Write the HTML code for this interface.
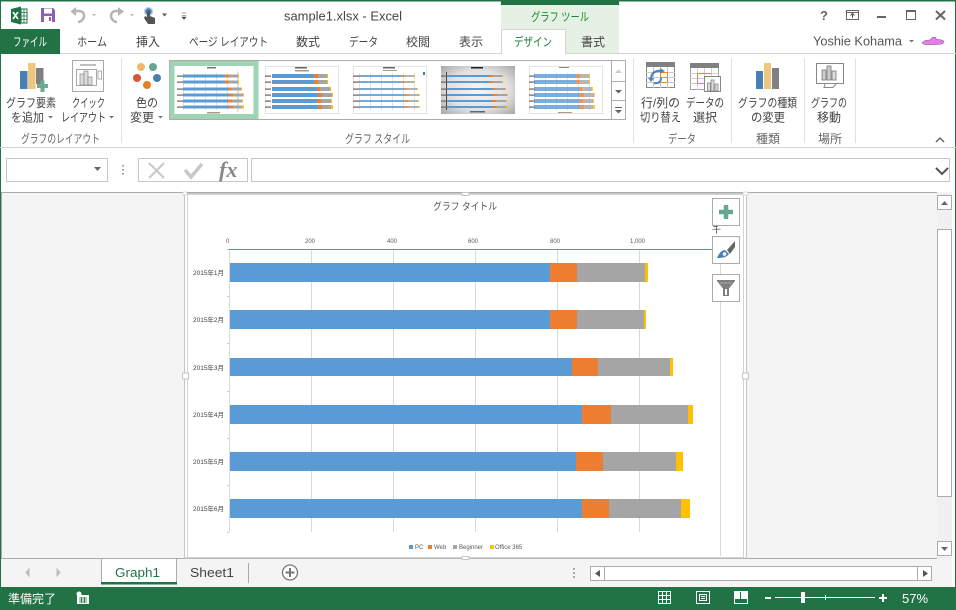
<!DOCTYPE html>
<html><head><meta charset="utf-8"><style>
html,body{margin:0;padding:0;width:956px;height:610px;overflow:hidden;background:#fff}
svg{display:block}
text{font-family:"Liberation Sans","Noto Sans CJK JP",sans-serif;fill:#444;font-size:12px}
.r{font-size:12px}
.g{fill:#666;font-size:12px}
.tb{font-size:12px}
.c{font-size:6px;fill:#595959}
.m{font-size:6.500px;fill:#444}
</style></head><body>
<svg width="956" height="610" viewBox="0 0 956 610" xmlns="http://www.w3.org/2000/svg">
<defs>
<g id="bars">
<rect x="230" y="263" width="320" height="19" fill="#5b9bd5"/><rect x="550" y="263" width="27" height="19" fill="#ed7d31"/><rect x="577" y="263" width="68" height="19" fill="#a5a5a5"/><rect x="645" y="263" width="3" height="19" fill="#ffc000"/>
<rect x="230" y="310" width="320" height="19" fill="#5b9bd5"/><rect x="550" y="310" width="27" height="19" fill="#ed7d31"/><rect x="577" y="310" width="67" height="19" fill="#a5a5a5"/><rect x="644" y="310" width="2" height="19" fill="#ffc000"/>
<rect x="230" y="358" width="342" height="18" fill="#5b9bd5"/><rect x="572" y="358" width="26" height="18" fill="#ed7d31"/><rect x="598" y="358" width="72" height="18" fill="#a5a5a5"/><rect x="670" y="358" width="3" height="18" fill="#ffc000"/>
<rect x="230" y="405" width="352" height="19" fill="#5b9bd5"/><rect x="582" y="405" width="29" height="19" fill="#ed7d31"/><rect x="611" y="405" width="77" height="19" fill="#a5a5a5"/><rect x="688" y="405" width="5" height="19" fill="#ffc000"/>
<rect x="230" y="452" width="346" height="19" fill="#5b9bd5"/><rect x="576" y="452" width="27" height="19" fill="#ed7d31"/><rect x="603" y="452" width="73" height="19" fill="#a5a5a5"/><rect x="676" y="452" width="7" height="19" fill="#ffc000"/>
<rect x="230" y="499" width="352" height="19" fill="#5b9bd5"/><rect x="582" y="499" width="27" height="19" fill="#ed7d31"/><rect x="609" y="499" width="72" height="19" fill="#a5a5a5"/><rect x="681" y="499" width="9" height="19" fill="#ffc000"/>
</g>
<g id="tr" fill="none">
<path stroke="#5b9bd5" d="M7 10H49M7 16H49M7 23H52M7 29H53M7 35H52M7 41H53"/>
<path stroke="#ed7d31" d="M49 10H53M49 16H53M52 23H55M53 29H57M52 35H56M53 41H57"/>
<path stroke="#a5a5a5" d="M53 10H62M53 16H62M55 23H65M57 29H67M56 35H66M57 41H66"/>
<path stroke="#ffc000" d="M62 10H63M62 16H63M65 23H66M67 29H68M66 35H67M66 41H68"/>
</g>
<g id="ticks" fill="#7a5a50">
<rect x="0" y="9.500" width="6" height="1.200"/><rect x="0" y="15.500" width="6" height="1.200"/><rect x="0" y="22.500" width="6" height="1.200"/><rect x="0" y="28.500" width="6" height="1.200"/><rect x="0" y="34.500" width="6" height="1.200"/><rect x="0" y="40.500" width="6" height="1.200"/>
</g>
<g id="grid" stroke="#e2e2e2" stroke-width="1">
<path d="M6.500 7V44M17.500 7V44M28.500 7V44M39.500 7V44M50.500 7V44M61.500 7V44"/>
</g>
<radialGradient id="gr" cx="50%" cy="50%" r="70%"><stop offset="0" stop-color="#f6f6f6"/><stop offset=".6" stop-color="#e0e0e0"/><stop offset="1" stop-color="#a8a8a8"/></radialGradient>
</defs>

<rect width="956" height="610" fill="#fff"/>
<!-- window border -->
<rect x="0" y="0" width="956" height="1.500" fill="#217346"/>
<rect x="0" y="0" width="1" height="610" fill="#217346"/>
<rect x="955" y="0" width="1" height="610" fill="#217346"/>

<!-- QAT -->
<path d="M11 9L21 6.500V24.500L11 22Z" fill="#1f7246"/><rect x="21" y="9" width="6" height="14" fill="#fff" stroke="#1f7246"/><path d="M21 12.500H27M21 16H27M21 19.500H27M24 9V23" stroke="#1f7246" stroke-width=".8"/>
<path d="M13 12L18 19M18 12L13 19" stroke="#fff" stroke-width="1.600"/>
<path d="M41 8H53L55 10V22H41Z" fill="#8a5fb5"/><rect x="44" y="8.500" width="8" height="5" fill="#fff"/><rect x="44" y="16" width="8" height="6" fill="#fff"/><rect x="49" y="17" width="2" height="4" fill="#8a5fb5"/>
<path d="M73 11H79C83 11 84 14 84 16C84 19 81 22 78 22" fill="none" stroke="#b5b5b5" stroke-width="2.500"/><path d="M70.500 11.500L76 7V16Z" fill="#b5b5b5"/>
<path d="M92 14L96 14L94 16.500Z" fill="#bbb"/>
<path d="M121 11H116C112 11 111 14 111 16C111 19 114 22 117 22" fill="none" stroke="#b5b5b5" stroke-width="2.500"/><path d="M124 11.500L118 7V16Z" fill="#b5b5b5"/>
<path d="M130 14L134 14L132 16.500Z" fill="#bbb"/>
<circle cx="148.500" cy="11.500" r="4" fill="#4a7fb0" stroke="#c3d6e8" stroke-width="1.500"/><path d="M147 11V17L145 16L144 18L148 24H155V18L150 16V11Z" fill="#555"/>
<path d="M162 13.500L167 13.500L164.500 16.500Z" fill="#555"/>
<path d="M182 13H186M182 15.500H186M182 17L186 17L184 19.500Z" fill="#555" stroke="#555" stroke-width=".6"/>

<text x="284" y="20.500" textLength="118" lengthAdjust="spacingAndGlyphs" style="font-size:13px">sample1.xlsx - Excel</text>

<!-- contextual tool -->
<rect x="501" y="1" width="118" height="52" fill="#e5f1e5"/>
<rect x="501" y="1" width="118" height="4" fill="#217346"/>
<text x="531" y="21" style="font-size:12px;fill:#1a8a2a" textLength="58" lengthAdjust="spacingAndGlyphs">グラフ ツール</text>

<!-- window controls -->
<text x="820" y="20" style="font-size:13px;font-weight:bold;fill:#666">?</text>
<rect x="846.500" y="10.500" width="12" height="9" fill="none" stroke="#666"/><path d="M846 12.500H859" stroke="#666"/><path d="M852.500 18V14M850.500 15.500L852.500 13.500L854.500 15.500" fill="none" stroke="#555"/>
<rect x="877" y="16" width="9" height="2" fill="#666"/>
<rect x="906.500" y="10.500" width="9" height="9" fill="none" stroke="#666"/><rect x="906" y="10" width="10" height="2" fill="#666"/>
<path d="M936 11L945 19.500M945 11L936 19.500" stroke="#666" stroke-width="2"/>

<!-- tabs -->
<rect x="0" y="29" width="60" height="25" fill="#217346"/>
<rect x="60" y="53" width="896" height="1" fill="#d4d4d4"/>
<path d="M501.500 54V29.500H565.500V53" fill="#fff" stroke="#d4d4d4"/><rect x="502" y="52" width="63" height="3" fill="#fff"/>
<text x="13" y="46" style="fill:#fff;font-size:12px" textLength="34" lengthAdjust="spacingAndGlyphs">ファイル</text>
<text x="77" y="46" class="tb" textLength="30" lengthAdjust="spacingAndGlyphs">ホーム</text>
<text x="136" y="46" class="tb" textLength="24" lengthAdjust="spacingAndGlyphs">挿入</text>
<text x="189" y="46" class="tb" textLength="79" lengthAdjust="spacingAndGlyphs">ページ レイアウト</text>
<text x="296" y="46" class="tb" textLength="24" lengthAdjust="spacingAndGlyphs">数式</text>
<text x="349" y="46" class="tb" textLength="29" lengthAdjust="spacingAndGlyphs">データ</text>
<text x="406" y="46" class="tb" textLength="24" lengthAdjust="spacingAndGlyphs">校閲</text>
<text x="459" y="46" class="tb" textLength="24" lengthAdjust="spacingAndGlyphs">表示</text>
<text x="514" y="46" style="fill:#1a7a30;font-size:12px" textLength="38" lengthAdjust="spacingAndGlyphs">デザイン</text>
<text x="581" y="46" class="tb" textLength="24" lengthAdjust="spacingAndGlyphs">書式</text>
<text x="813" y="45.500" style="font-size:12.500px;fill:#555" textLength="89" lengthAdjust="spacingAndGlyphs">Yoshie Kohama</text>
<path d="M909 40H914L911.500 42.500Z" fill="#777"/>
<path d="M922 43C923 41 926 40 930 40L932 37.500H936V39.500C940 39.500 944 40 944 42C944 44 940 44.500 934 44.500H926C924 44.500 923 44 922 43Z" fill="#ee7bee" stroke="#555" stroke-width=".5"/>

<!-- ribbon -->
<rect x="0" y="147" width="956" height="1" fill="#d4d4d4"/>
<path d="M121.500 58V143M633.500 58V143M731.500 58V143M804.500 58V143M855.500 58V143" stroke="#e1e1e1"/>

<!-- chart elements icon -->
<rect x="20" y="71" width="7.500" height="18" fill="#4a7fb5"/><rect x="28" y="63" width="7.500" height="26" fill="#edc77d"/><rect x="36" y="68" width="7.500" height="16" fill="#808080"/>
<path d="M37 86H48M42.500 80.500V92" stroke="#6da993" stroke-width="4"/>
<!-- quick layout -->
<rect x="72.500" y="60.500" width="31" height="31" fill="#fff" stroke="#a8a8a8"/>
<path d="M80 65H96" stroke="#a8a8a8" stroke-width="1.500"/><rect x="76.500" y="69.500" width="20" height="16" fill="#fff" stroke="#a8a8a8"/>
<rect x="80" y="74" width="4" height="11" fill="#ddd" stroke="#888" stroke-width=".7"/><rect x="84" y="71" width="4" height="14" fill="#ddd" stroke="#888" stroke-width=".7"/><rect x="88" y="77" width="4" height="8" fill="#ddd" stroke="#888" stroke-width=".7"/>
<rect x="98" y="71" width="3.500" height="8" fill="#fff" stroke="#888" stroke-width=".7"/>
<!-- colors -->
<circle cx="141" cy="67" r="4" fill="#eebb6e"/><circle cx="153" cy="67" r="4" fill="#66a690"/><circle cx="137" cy="78" r="4" fill="#d9553a"/><circle cx="157" cy="78" r="4" fill="#4a7fb0"/><circle cx="147" cy="85" r="4" fill="#e67e22"/>

<text x="6" y="107" class="r" textLength="50" lengthAdjust="spacingAndGlyphs">グラフ要素</text>
<text x="11" y="121.500" class="r" textLength="33" lengthAdjust="spacingAndGlyphs">を追加</text><path d="M48 116H53L50.500 118.500Z" fill="#777"/>
<text x="72" y="107" class="r" textLength="33" lengthAdjust="spacingAndGlyphs">クイック</text>
<text x="61" y="121.500" class="r" textLength="45" lengthAdjust="spacingAndGlyphs">レイアウト</text><path d="M109 116H114L111.500 118.500Z" fill="#777"/>
<text x="136" y="107" class="r" textLength="22" lengthAdjust="spacingAndGlyphs">色の</text>
<text x="130" y="121.500" class="r" textLength="24" lengthAdjust="spacingAndGlyphs">変更</text><path d="M158 116H163L160.500 118.500Z" fill="#777"/>
<text x="21" y="143" class="g" textLength="79" lengthAdjust="spacingAndGlyphs">グラフのレイアウト</text>
<text x="345" y="143" class="g" textLength="65" lengthAdjust="spacingAndGlyphs">グラフ スタイル</text>

<!-- gallery -->
<rect x="169.500" y="60.500" width="456" height="59" fill="#fff" stroke="#ababab"/>
<rect x="172" y="63.500" width="84" height="53" fill="#fff" stroke="#9fd3b5" stroke-width="5"/>
<g transform="translate(177,66)"><use href="#grid"/><rect x="60" y="5" width="1" height="41" fill="#ddd"/></g>
<use href="#tr" stroke-width="3" transform="translate(176,66)"/>
<use href="#ticks" transform="translate(177,66)"/>
<rect x="207" y="67" width="9" height="1.500" fill="#777"/><rect x="207" y="112" width="13" height="1.500" fill="#a98"/>

<rect x="265.500" y="66.500" width="73" height="47" fill="#fff" stroke="#e4e4e4"/>
<use href="#ticks" transform="translate(265,66)"/>
<use href="#tr" stroke-width="4" transform="translate(265,66)"/>
<rect x="295" y="67" width="12" height="1.500" fill="#666"/><rect x="295" y="70" width="14" height="1.500" fill="#a98"/>

<rect x="353.500" y="66.500" width="73" height="47" fill="#fff" stroke="#e4e4e4"/>
<use href="#grid" transform="translate(353,66)"/>
<use href="#ticks" transform="translate(353,66)"/>
<g opacity=".85"><use href="#tr" stroke-width="2" transform="translate(352,66)"/></g>
<rect x="383" y="67" width="12" height="1.500" fill="#666"/><rect x="383" y="70" width="14" height="1" fill="#a98"/>
<rect x="423" y="72" width="2" height="3" fill="#47a"/>

<rect x="441" y="66" width="74" height="48" fill="url(#gr)"/>
<rect x="446" y="72" width="1" height="38" fill="#444"/>
<use href="#ticks" transform="translate(441,66)"/>
<use href="#tr" stroke-width="2" transform="translate(440,66)"/>
<rect x="471" y="67" width="12" height="1.500" fill="#222"/><rect x="470" y="111" width="15" height="1.500" fill="#666"/>

<rect x="529.500" y="66.500" width="73" height="47" fill="#fff" stroke="#e4e4e4"/>
<use href="#grid" transform="translate(528,66)"/>
<use href="#ticks" transform="translate(529,66)"/>
<g opacity=".8"><use href="#tr" stroke-width="4" transform="translate(527,66)"/></g>
<rect x="559" y="67" width="10" height="1" fill="#888"/><rect x="558" y="112" width="14" height="1" fill="#a98"/>

<rect x="611.500" y="60.500" width="14" height="59" fill="#fff" stroke="#ababab"/>
<path d="M611 81.500H625M611 100.500H625" stroke="#ababab"/>
<path d="M615 73H622L618.500 69.500Z" fill="#ccc"/>
<path d="M615 90H622L618.500 93.500Z" fill="#666"/>
<path d="M615 107.500H622" stroke="#666"/><path d="M615 110H622L618.500 113.500Z" fill="#666"/>

<!-- switch icon -->
<g transform="translate(646,62)"><rect x=".5" y=".5" width="28" height="25" fill="#fff" stroke="#888"/><rect width="29" height="5" fill="#808080"/>
<path d="M0 10.500H29M0 15.500H29M0 20.500H29M7.500 5V26M14.500 5V26M21.500 5V26" stroke="#c8c8c8"/>
<rect x="14.500" y="10.500" width="7" height="10" fill="none" stroke="#e88a2e"/>
<path d="M21.500 10.500V20.500M14.500 15.500H21.500" stroke="#e88a2e"/>
<path d="M5 17C5 11 10 8 15 9" fill="none" stroke="#4a85c0" stroke-width="2.200"/><path d="M14 6L19 9L14 12Z" fill="#4a85c0"/><path d="M2 16L8 16L5 20Z" fill="#4a85c0"/>
<path d="M15 16C15 20 12 22 8 21" fill="none" stroke="#4a85c0" stroke-width="2"/></g>
<!-- select data -->
<g transform="translate(690,63)"><rect x=".5" y=".5" width="28" height="26" fill="#fff" stroke="#a0a0a0"/><rect width="29" height="5" fill="#808080"/>
<path d="M0 10.500H29M0 15.500H29M0 20.500H29M7.500 5V27M14.500 5V27M21.500 5V27" stroke="#d0d0d0"/>
<path d="M7.500 15.500V10.500H21.500M7.500 15.500V20.500H14" fill="none" stroke="#e88a2e"/>
<rect x="14.500" y="13.500" width="16" height="15" fill="#fff" stroke="#888"/>
<rect x="17.500" y="20" width="3" height="8" fill="#ddd" stroke="#777" stroke-width=".7"/><rect x="21" y="17" width="3" height="11" fill="#ddd" stroke="#777" stroke-width=".7"/><rect x="25" y="21" width="3" height="7" fill="#ddd" stroke="#777" stroke-width=".7"/></g>
<!-- chart type -->
<rect x="756" y="71" width="7" height="18" fill="#4a7fb5"/><rect x="764" y="63" width="7" height="26" fill="#edc77d"/><rect x="772" y="68" width="7" height="21" fill="#808080"/>
<!-- move chart -->
<rect x="816.500" y="63.500" width="27" height="20" fill="#fff" stroke="#888"/><path d="M825 84L824 87.500H833L836 84" fill="#fff" stroke="#888"/>
<rect x="822" y="70" width="4" height="10" fill="#ccc" stroke="#777" stroke-width=".8"/><rect x="827" y="66" width="4" height="14" fill="#ccc" stroke="#777" stroke-width=".8"/><rect x="832" y="71" width="4" height="9" fill="#ddd" stroke="#777" stroke-width=".8"/>

<text x="641" y="107" class="r" textLength="39" lengthAdjust="spacingAndGlyphs">行/列の</text>
<text x="640" y="121.500" class="r" textLength="41" lengthAdjust="spacingAndGlyphs">切り替え</text>
<text x="686" y="107" class="r" textLength="38" lengthAdjust="spacingAndGlyphs">データの</text>
<text x="693" y="121.500" class="r" textLength="24" lengthAdjust="spacingAndGlyphs">選択</text>
<text x="668" y="143" class="g" textLength="28" lengthAdjust="spacingAndGlyphs">データ</text>
<text x="738" y="107" class="r" textLength="59" lengthAdjust="spacingAndGlyphs">グラフの種類</text>
<text x="751" y="121.500" class="r" textLength="34" lengthAdjust="spacingAndGlyphs">の変更</text>
<text x="756" y="143" class="g" textLength="24" lengthAdjust="spacingAndGlyphs">種類</text>
<text x="811" y="107" class="r" textLength="36" lengthAdjust="spacingAndGlyphs">グラフの</text>
<text x="817" y="121.500" class="r" textLength="24" lengthAdjust="spacingAndGlyphs">移動</text>
<text x="818" y="143" class="g" textLength="24" lengthAdjust="spacingAndGlyphs">場所</text>
<path d="M936 142L940 138L944 142" fill="none" stroke="#666" stroke-width="1.500"/>

<!-- formula bar -->
<rect x="6.500" y="158.500" width="101" height="23" fill="#fff" stroke="#c6c6c6"/>
<path d="M94 167H101L97.500 171Z" fill="#666"/>
<path d="M123 165V166.500M123 169V170.500M123 173V174.500" stroke="#999" stroke-width="2"/>
<rect x="138.500" y="158.500" width="109" height="23" fill="#fff" stroke="#c6c6c6"/>
<path d="M149 163L164 178M164 163L149 178" stroke="#c8c8c8" stroke-width="2"/>
<path d="M185 170L191 177L202 164" fill="none" stroke="#c8c8c8" stroke-width="3.500"/>
<text x="219" y="177" style="font-family:'Liberation Serif',serif;font-style:italic;font-weight:bold;font-size:22px;fill:#888">fx</text>
<rect x="251.500" y="158.500" width="698" height="23" fill="#fff" stroke="#c6c6c6"/>
<path d="M936 168L942 174L948 168" fill="none" stroke="#555" stroke-width="2"/>

<!-- sheet area -->
<rect x="1" y="192" width="954" height="395" fill="#f4f4f4"/>
<rect x="1" y="192" width="936" height="1" fill="#ababab"/>
<rect x="1" y="192" width="1" height="367" fill="#ababab"/>
<rect x="937" y="193" width="15" height="366" fill="#f0f0f0"/><rect x="952" y="192" width="3" height="395" fill="#fff"/>
<rect x="1" y="558" width="936" height="1" fill="#ababab"/>

<!-- chart frame -->
<rect x="184.500" y="193.500" width="562" height="364.500" fill="#fff" stroke="#c6c6c6"/>
<rect x="187.500" y="194.500" width="556" height="363" fill="#fff" stroke="#d4d4d4"/>
<rect x="183" y="192" width="4" height="3" fill="#fff" stroke="#c6c6c6" stroke-width=".6"/><rect x="743" y="192" width="5" height="3" fill="#fff" stroke="#c6c6c6" stroke-width=".6"/>
<rect x="462" y="192.500" width="7" height="3" fill="#fff" stroke="#c6c6c6"/><rect x="462" y="556.500" width="7" height="3" fill="#fff" stroke="#c6c6c6"/>
<rect x="182.500" y="373" width="6" height="6" fill="#fff" stroke="#c6c6c6"/><rect x="742.500" y="373" width="6" height="6" fill="#fff" stroke="#c6c6c6"/>

<!-- chart -->
<path d="M229.500 249V532M311.500 249V532M393.500 249V532M475.500 249V532M557.500 249V532M639.500 249V532M720.500 249V556" stroke="#d9d9d9"/>
<path d="M229 249.500H713" stroke="#5b8fc0"/>
<path d="M227 296.500H229M227 343.500H229M227 391.500H229M227 438.500H229M227 485.500H229M227 532.500H229M227 249.500H229" stroke="#ccc"/>
<use href="#bars"/>
<text x="433" y="210" style="font-size:10px;fill:#555" textLength="64" lengthAdjust="spacingAndGlyphs">グラフ タイトル</text>
<text x="226" y="243" class="c">0</text><text x="305" y="243" class="c">200</text><text x="387" y="243" class="c">400</text><text x="468" y="243" class="c">600</text><text x="550" y="243" class="c">800</text><text x="630" y="243" class="c">1,000</text>
<text x="712" y="233" style="font-size:9px;fill:#444">千</text>
<text x="193" y="275" class="m" textLength="31" lengthAdjust="spacingAndGlyphs">2015年1月</text><text x="193" y="322" class="m" textLength="31" lengthAdjust="spacingAndGlyphs">2015年2月</text><text x="193" y="370" class="m" textLength="31" lengthAdjust="spacingAndGlyphs">2015年3月</text><text x="193" y="417" class="m" textLength="31" lengthAdjust="spacingAndGlyphs">2015年4月</text><text x="193" y="464" class="m" textLength="31" lengthAdjust="spacingAndGlyphs">2015年5月</text><text x="193" y="511" class="m" textLength="31" lengthAdjust="spacingAndGlyphs">2015年6月</text>
<rect x="409" y="545" width="4" height="4" fill="#5b9bd5"/><text x="415" y="549" class="c">PC</text>
<rect x="428" y="545" width="4" height="4" fill="#ed7d31"/><text x="434" y="549" class="c">Web</text>
<rect x="453" y="545" width="4" height="4" fill="#a5a5a5"/><text x="459" y="549" class="c">Beginner</text>
<rect x="490" y="545" width="4" height="4" fill="#ffc000"/><text x="495" y="549" class="c">Office 365</text>

<!-- chart side buttons -->
<rect x="712.500" y="198.500" width="27" height="27" fill="#fff" stroke="#ababab"/>
<path d="M719 212H733M726 205V219" stroke="#68a78f" stroke-width="4.500"/>
<rect x="712.500" y="236.500" width="27" height="27" fill="#fff" stroke="#ababab"/>
<path d="M727 250L735 241V247L730 254Z" fill="#666"/><path d="M717 258C719 253 722 250 725 250L729 254C727 257 723 258 717 258Z" fill="#4a7fb5"/><circle cx="724.500" cy="254" r="1.800" fill="#fff"/>
<rect x="712.500" y="274.500" width="27" height="27" fill="#fff" stroke="#ababab"/>
<path d="M717 280H735V281L729 288.500V296H723V288.500L717 281Z" fill="#7f7f7f"/><path d="M725 289V295H727V289Z" fill="#fff"/><path d="M720 283H732" stroke="#aaa"/>

<!-- v scroll -->
<rect x="937.500" y="195.500" width="14" height="14" fill="#fff" stroke="#ababab"/><path d="M941 205H948L944.500 201Z" fill="#666"/>
<rect x="937.500" y="229.500" width="14" height="267" fill="#fff" stroke="#ababab"/>
<rect x="937.500" y="541.500" width="14" height="14" fill="#fff" stroke="#ababab"/><path d="M941 547H948L944.500 551Z" fill="#666"/>

<!-- tab bar -->
<path d="M29 569V576L26 572.500ZM57 569V576L60 572.500Z" fill="#bbb" stroke="#bbb"/>
<rect x="101" y="559" width="76" height="23" fill="#fff"/><path d="M101.500 559V582M176.500 559V582" stroke="#ababab"/><rect x="101" y="582" width="76" height="2.500" fill="#217346"/>
<text x="115" y="577" style="font-size:13px;fill:#217346" textLength="45" lengthAdjust="spacingAndGlyphs">Graph1</text>
<text x="190" y="577" style="font-size:13px;fill:#444" textLength="44" lengthAdjust="spacingAndGlyphs">Sheet1</text>
<path d="M248.500 563V583" stroke="#ababab"/>
<circle cx="290" cy="572.500" r="7.500" fill="#fff" stroke="#777" stroke-width="1.300"/><path d="M285.500 572.500H294.500M290 568V577" stroke="#777" stroke-width="2"/>
<path d="M574 568V570M574 572V574M574 576V578" stroke="#aaa" stroke-width="2"/>
<rect x="590.500" y="566.500" width="341" height="14" fill="#fff" stroke="#ababab"/>
<path d="M604.500 566V581M917.500 566V581" stroke="#ababab"/>
<path d="M600 570V577L595 573.500Z" fill="#555"/><path d="M923 570V577L928 573.500Z" fill="#555"/>

<!-- status bar -->
<rect x="0" y="587" width="956" height="23" fill="#217346"/>
<text x="8" y="603" style="font-size:12px;fill:#fff" textLength="48" lengthAdjust="spacingAndGlyphs">準備完了</text>
<circle cx="79" cy="594" r="2.500" fill="#fff"/><path d="M77 595H89V604H77Z" fill="#fff"/><path d="M79 598H87M79 600H87M79 602H87M81.500 597V603M84.500 597V603" stroke="#217346" stroke-width=".8"/>
<g fill="none" stroke="#fff">
<path d="M658.500 591.500H670.500V603.500H658.500ZM662.500 591.500V603.500M666.500 591.500V603.500M658.500 595.500H670.500M658.500 599.500H670.500"/>
<rect x="696.500" y="591.500" width="13" height="12"/><rect x="699.500" y="594.500" width="7" height="6"/><path d="M701 596.500H705M701 598.500H705"/>
<rect x="734.500" y="591.500" width="13" height="12"/>
</g>
<rect x="735" y="592" width="5" height="7" fill="#fff"/><rect x="741" y="592" width="6" height="7" fill="#fff"/>
<rect x="765" y="597" width="6" height="2" fill="#fff"/>
<rect x="775" y="597" width="100" height="1" fill="#fff"/><rect x="801" y="592" width="4" height="11" fill="#fff"/><rect x="825" y="595" width="1" height="5" fill="#fff"/>
<path d="M879 598H887M883 594V602" stroke="#fff" stroke-width="2"/>
<text x="902" y="603" style="font-size:13px;fill:#fff" textLength="26" lengthAdjust="spacingAndGlyphs">57%</text>
</svg>
</body></html>
